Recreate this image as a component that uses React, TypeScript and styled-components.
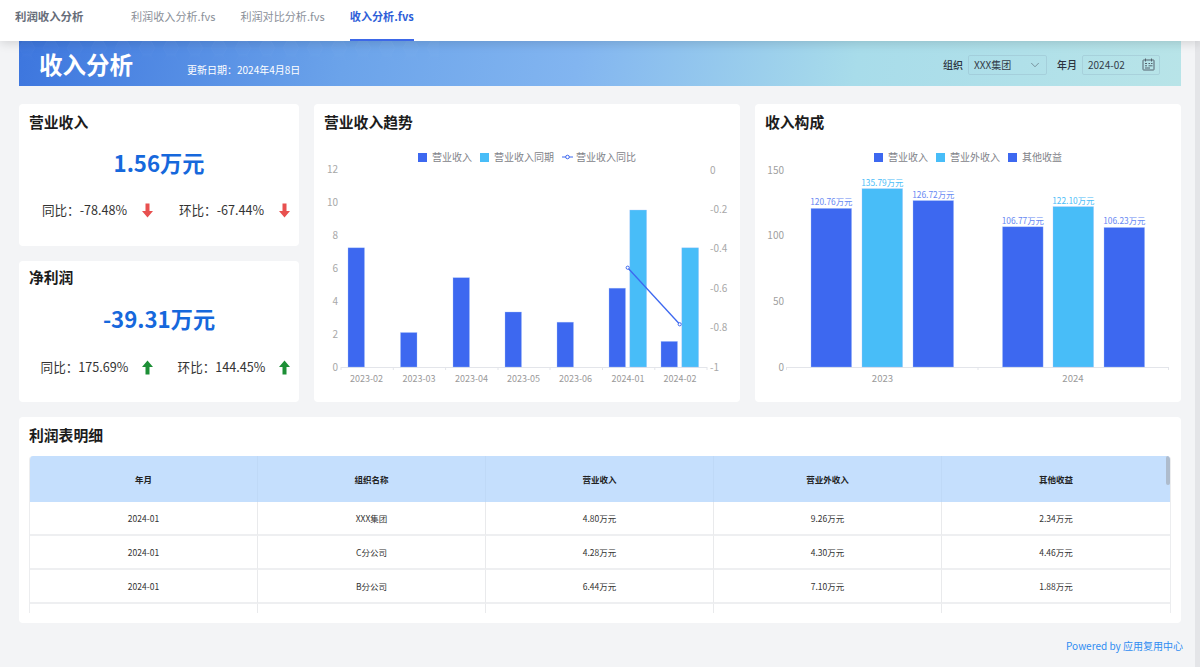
import React from "react";
import styled, { createGlobalStyle } from "styled-components";
import { ChevronDown } from "lucide-react";

const BLUE = "#3d68f0";
const CYAN = "#48bdf8";
const FONT = `"Noto Sans CJK SC", "Noto Sans", sans-serif`;

const trendBars = [
  { label: "2023-02", x: 356, value: 7.26 },
  { label: "2023-03", x: 408.5, value: 2.1 },
  { label: "2023-04", x: 461, value: 5.44 },
  { label: "2023-05", x: 513, value: 3.35 },
  { label: "2023-06", x: 565, value: 2.73 },
  { label: "2024-01", x: 617.5, value: 4.8, last: 9.56 },
  { label: "2024-02", x: 669.5, value: 1.56, last: 7.26 },
];

const mixBars = [
  { x: 811, value: 120.76, text: "120.76万元", color: BLUE },
  { x: 862, value: 135.79, text: "135.79万元", color: CYAN },
  { x: 913, value: 126.72, text: "126.72万元", color: BLUE },
  { x: 1002.5, value: 106.77, text: "106.77万元", color: BLUE },
  { x: 1053, value: 122.1, text: "122.10万元", color: CYAN },
  { x: 1104, value: 106.23, text: "106.23万元", color: BLUE },
];

const rows = [
  ["2024-01", "XXX集团", "4.80万元", "9.26万元", "2.34万元"],
  ["2024-01", "C分公司", "4.28万元", "4.30万元", "4.46万元"],
  ["2024-01", "B分公司", "6.44万元", "7.10万元", "1.88万元"],
  ["", "", "", "", ""],
];

const GlobalStyle = createGlobalStyle`
  html, body {
    margin: 0;
    padding: 0;
    background: #f3f4f6;
    font-family: ${FONT};
    overflow: hidden;
  }
`;

const Page = styled.div`
  position: relative;
  width: 1200px;
  height: 667px;
  overflow: hidden;
  background: #f3f4f6;
`;

const Scrollbar = styled.div`
  position: absolute;
  top: 41px;
  right: 0;
  bottom: 0;
  width: 5px;
  background: #e4e5e8;
`;

const NavBar = styled.nav`
  position: relative;
  z-index: 2;
  height: 41px;
  display: flex;
  align-items: stretch;
  padding-left: 15px;
  background: #fff;
  box-shadow: 0 2px 10px rgba(0, 0, 0, 0.14);
`;

const NavTitle = styled.div`
  width: 116px;
  font-size: 11.4px;
  line-height: 32px;
  font-weight: 700;
  color: #666d79;
`;

const NavTab = styled.div<{ $active?: boolean }>`
  margin-right: 25px;
  font-size: 11.1px;
  line-height: 32px;
  font-weight: ${({ $active }) => ($active ? 700 : 400)};
  color: ${({ $active }) => ($active ? "#2f5fd8" : "#8b9099")};
  border-bottom: 2px solid ${({ $active }) => ($active ? "#3d68e8" : "transparent")};
  height: 41px;
  box-sizing: border-box;
`;

const Content = styled.main`
  padding: 0 19px;
`;

const Banner = styled.header`
  position: relative;
  height: 45px;
  display: flex;
  align-items: center;
  padding: 0 21px 0 20px;
  color: #fff;
  background: linear-gradient(100deg, #3d76de 0%, #6ba3ea 28%, #82b5f0 48%, #a8dcea 72%, #b8e4e8 100%);
`;

const HexTexture = styled.svg`
  position: absolute;
  left: 0;
  top: 0;
  opacity: 0.5;
`;

const BannerTitle = styled.h1`
  position: relative;
  margin: 0;
  width: 148px;
  font-size: 23.5px;
  line-height: 30px;
  font-weight: 700;
`;

const BannerDate = styled.span`
  position: relative;
  margin-top: 13px;
  font-size: 10px;
  line-height: 14px;
`;

const Filters = styled.div`
  position: relative;
  margin-left: auto;
  margin-top: 2px;
  display: flex;
  align-items: center;
  color: #2b3340;
`;

const FilterLabel = styled.label`
  margin-right: 5px;
  font-size: 10px;
  font-weight: 500;
`;

const FilterBox = styled.div<{ $width: number; $gap?: number }>`
  width: ${({ $width }) => $width}px;
  height: 20px;
  margin-right: ${({ $gap }) => $gap ?? 0}px;
  box-sizing: border-box;
  padding: 0 4px 0 5px;
  display: flex;
  align-items: center;
  justify-content: space-between;
  border: 1px solid rgba(140, 170, 190, 0.3);
  border-radius: 2px;
  font-size: 10px;
  color: #333c48;
`;

const Board = styled.section`
  margin-top: 18px;
  display: grid;
  grid-template-columns: 280px 426px 426px;
  column-gap: 15px;
  height: 298px;
`;

const KpiColumn = styled.div`
  display: grid;
  grid-template-columns: minmax(0, 1fr);
  grid-template-rows: 142px 141px;
  row-gap: 15px;
`;

const Card = styled.div`
  background: #fff;
  border-radius: 4px;
  padding: 6px 10px 0;
  box-sizing: border-box;
`;

const KpiCard = styled(Card)<{ $tight?: boolean }>`
  padding-top: ${({ $tight }) => ($tight ? 4 : 6)}px;
`;

const CardTitle = styled.h2`
  margin: 0;
  font-size: 14.8px;
  line-height: 24px;
  font-weight: 700;
  color: #1c1c1c;
`;

const KpiValue = styled.div<{ $tight?: boolean }>`
  margin-top: ${({ $tight }) => ($tight ? 10 : 9)}px;
  text-align: center;
  font-size: 22.2px;
  line-height: 38px;
  font-weight: 700;
  color: #1668dc;
`;

const StatRow = styled.div<{ $tight?: boolean }>`
  margin: ${({ $tight }) => ($tight ? 20 : 19)}px -10px 0 5px;
  display: grid;
  grid-template-columns: 137px 1fr;
`;

const Stat = styled.div`
  display: flex;
  align-items: center;
`;

const StatText = styled.span`
  width: 101px;
  margin-right: 7px;
  text-align: center;
  white-space: nowrap;
  font-size: 12.6px;
  line-height: 20px;
  color: #333;
`;

const ChartCard = styled(Card)`
  padding-top: 6px;
`;

const Legend = styled.div`
  margin-top: 15px;
  margin-bottom: -6px;
  height: 16px;
  display: flex;
  align-items: center;
  justify-content: center;
`;

const LegendItem = styled.span`
  display: flex;
  align-items: center;
  margin: 0 4px;
  font-size: 10px;
  line-height: 16px;
  color: #7f8389;
`;

const Swatch = styled.i<{ $color: string }>`
  width: 9px;
  height: 9px;
  margin-right: 5px;
  background: ${({ $color }) => $color};
`;

const LineKey = styled.svg`
  margin-right: 3px;
`;

const ChartSvg = styled.svg`
  display: block;
  margin: 0 -10px;
  font-family: ${FONT};
`;

const TableCard = styled(Card)`
  margin-top: 15px;
  height: 206px;
`;

const TableClip = styled.div`
  position: relative;
  margin-top: 9px;
  height: 157px;
  overflow: hidden;
  border-radius: 4px 4px 0 0;
  border-left: 1px solid #ecedef;
  border-right: 1px solid #ecedef;
`;

const TableGrid = styled.div`
  display: grid;
  grid-template-columns: repeat(5, 1fr);
  grid-auto-rows: 34px;
`;

const HeadRow = styled.div`
  display: grid;
  grid-template-columns: repeat(5, 1fr);
`;

const HeadCell = styled.div`
  height: 46px;
  display: flex;
  align-items: center;
  justify-content: center;
  background: #c5dffd;
  border-right: 1px solid #bfd9f7;
  font-size: 8.5px;
  font-weight: 700;
  color: #222;
  &:nth-child(5) {
    border-right: none;
  }
`;

const BodyCell = styled.div`
  display: flex;
  align-items: center;
  justify-content: center;
  box-sizing: border-box;
  border-right: 1px solid #e9eaec;
  border-bottom: 2px solid #eeeff1;
  font-size: 8.5px;
  color: #333;
  &:nth-child(5n) {
    border-right: none;
  }
`;

const ThumbBar = styled.div`
  position: absolute;
  top: 0;
  right: 0;
  width: 4px;
  height: 29px;
  background: #aebccd;
  border-radius: 2px;
`;

const Footer = styled.div`
  margin-top: 15px;
  margin-right: -2px;
  text-align: right;
  font-size: 10px;
  line-height: 16px;
  color: #2f8cf2;
`;

const Arrow = ({ up }: { up?: boolean }) => (
  <svg width="11" height="15" viewBox="0 0 11 15">
    <path
      d={up ? "M5.5 0.5 L11 7 H7.5 V14.5 H3.5 V7 H0 Z" : "M5.5 14.5 L11 8 H7.5 V0.5 H3.5 V8 H0 Z"}
      fill={up ? "#1d8f36" : "#e8504f"}
    />
  </svg>
);

const CalendarIcon = () => (
  <svg width="13" height="13" viewBox="0 0 13 13" fill="none" stroke="#55636e" strokeWidth="1">
    <rect x="1" y="2" width="11" height="10" rx="0.5" />
    <path d="M3.5 0.5V3.5M9.5 0.5V3.5M3 5.5H5M6.5 5.5H8M9 5.5H10.5M3 7.8H5M6.5 7.8H10.5M3 10H8" />
  </svg>
);

const Hexes = () => (
  <HexTexture width="420" height="24">
    <defs>
      <pattern id="hex" width="24" height="14" patternUnits="userSpaceOnUse">
        <path
          d="M0 7 L4 0 H12 L16 7 L12 14 H4 Z M16 7 H24"
          fill="rgba(255,255,255,0.05)"
          stroke="rgba(255,255,255,0.09)"
          strokeWidth="0.6"
        />
      </pattern>
      <linearGradient id="hexFade" x1="0" y1="0" x2="0" y2="1">
        <stop offset="0" stopColor="#fff" />
        <stop offset="1" stopColor="#000" />
      </linearGradient>
      <mask id="hexMask">
        <rect width="420" height="24" fill="url(#hexFade)" />
      </mask>
    </defs>
    <rect width="420" height="24" fill="url(#hex)" mask="url(#hexMask)" />
  </HexTexture>
);

const Bar = ({ x, width, top, bottom, color }: { x: number; width: number; top: number; bottom: number; color: string }) => (
  <rect x={x} y={top} width={width} height={bottom - top} fill={color} stroke="#a9c4fb" strokeOpacity="0.55" strokeWidth="0.6" />
);

// chart coordinates are in page pixels, the viewBox shifts them into the card
const TrendChart = () => {
  const base = 367;
  const y = (v: number) => base - v * 16.42;
  const right = (v: number) => base - (v + 1) * 197;
  return (
    <ChartSvg width="426" height="234" viewBox="314 159 426 234">
      {[0, 2, 4, 6, 8, 10, 12].map((v) => (
        <text key={v} x="338" y={y(v) + 3.5} textAnchor="end" fontSize="10" fill="#a8a8a8">
          {v}
        </text>
      ))}
      {[0, -0.2, -0.4, -0.6, -0.8, -1].map((v) => (
        <text key={v} x="710" y={right(v) + 3.5} fontSize="10" fill="#a8a8a8">
          {v}
        </text>
      ))}
      <line x1="341" x2="707" y1="367.5" y2="367.5" stroke="#e3e5ea" />
      {[341, 393.3, 445.6, 498, 550, 602.5, 654.8, 707].map((x) => (
        <line key={x} x1={x} x2={x} y1="367" y2="370" stroke="#e3e5ea" />
      ))}
      {trendBars.map((b) => (
        <g key={b.label}>
          <Bar x={b.last ? b.x - 8.5 : b.x - 8} width={16.5} top={y(b.value)} bottom={base} color={BLUE} />
          {b.last && <Bar x={b.x + 12.3} width={16.8} top={y(b.last)} bottom={base} color={CYAN} />}
          <text x={b.x + 10.5} y="382" textAnchor="middle" fontSize="9" fill="#9a9a9a">
            {b.label}
          </text>
        </g>
      ))}
      <line x1="627.7" y1="267.7" x2="679.7" y2="324.3" stroke="#3d68f0" strokeWidth="1.3" />
      <circle cx="627.7" cy="267.7" r="1.6" fill="#fff" stroke="#3d68f0" />
      <circle cx="679.7" cy="324.3" r="1.6" fill="#fff" stroke="#3d68f0" />
    </ChartSvg>
  );
};

const MixChart = () => {
  const base = 367;
  const y = (v: number) => base - v * 1.3133;
  return (
    <ChartSvg width="426" height="234" viewBox="755 159 426 234">
      {[0, 50, 100, 150].map((v) => (
        <text key={v} x="784" y={y(v) + 3.5} textAnchor="end" fontSize="10" fill="#a0a0a0">
          {v}
        </text>
      ))}
      <line x1="786.5" x2="1168.5" y1="367.5" y2="367.5" stroke="#e3e5ea" />
      {[786.5, 978, 1168.5].map((x) => (
        <line key={x} x1={x} x2={x} y1="367" y2="370" stroke="#e3e5ea" />
      ))}
      {mixBars.map((b) => (
        <g key={b.x}>
          <Bar x={b.x} width={40.6} top={y(b.value)} bottom={base} color={b.color} />
          <text
            x={b.x + 20.3}
            y={y(b.value) - 3}
            textAnchor="middle"
            fontSize="8.4"
            fill={b.color === CYAN ? "#4cbdf8" : "#6788f3"}
          >
            {b.text}
          </text>
        </g>
      ))}
      <text x="882.5" y="382" textAnchor="middle" fontSize="9.6" fill="#9a9a9a">2023</text>
      <text x="1073" y="382" textAnchor="middle" fontSize="9.6" fill="#9a9a9a">2024</text>
    </ChartSvg>
  );
};

const Kpi = ({ title, value, stats, up }: { title: string; value: string; stats: string[]; up?: boolean }) => (
  <KpiCard $tight={up}>
    <CardTitle>{title}</CardTitle>
    <KpiValue $tight={up}>{value}</KpiValue>
    <StatRow $tight={up}>
      {stats.map((s) => (
        <Stat key={s}>
          <StatText>{s}</StatText>
          <Arrow up={up} />
        </Stat>
      ))}
    </StatRow>
  </KpiCard>
);

export default function App() {
  return (
    <Page>
      <GlobalStyle />
      <NavBar>
        <NavTitle>利润收入分析</NavTitle>
        <NavTab>利润收入分析.fvs</NavTab>
        <NavTab>利润对比分析.fvs</NavTab>
        <NavTab $active>收入分析.fvs</NavTab>
      </NavBar>
      <Content>
        <Banner>
          <Hexes />
          <BannerTitle>收入分析</BannerTitle>
          <BannerDate>更新日期：2024年4月8日</BannerDate>
          <Filters>
            <FilterLabel>组织</FilterLabel>
            <FilterBox $width={79} $gap={10}>
              XXX集团
              <ChevronDown size={14} strokeWidth={1} color="#4d5a66" />
            </FilterBox>
            <FilterLabel>年月</FilterLabel>
            <FilterBox $width={78}>
              2024-02
              <CalendarIcon />
            </FilterBox>
          </Filters>
        </Banner>
        <Board>
          <KpiColumn>
            <Kpi title="营业收入" value="1.56万元" stats={["同比：-78.48%", "环比：-67.44%"]} />
            <Kpi title="净利润" value="-39.31万元" stats={["同比：175.69%", "环比：144.45%"]} up />
          </KpiColumn>
          <ChartCard>
            <CardTitle>营业收入趋势</CardTitle>
            <Legend>
              <LegendItem><Swatch $color={BLUE} />营业收入</LegendItem>
              <LegendItem><Swatch $color={CYAN} />营业收入同期</LegendItem>
              <LegendItem>
                <LineKey width="11" height="6" viewBox="0 0 11 6">
                  <line x1="0" x2="11" y1="3" y2="3" stroke={BLUE} />
                  <circle cx="5.5" cy="3" r="1.8" fill="#fff" stroke={BLUE} />
                </LineKey>
                营业收入同比
              </LegendItem>
            </Legend>
            <TrendChart />
          </ChartCard>
          <ChartCard>
            <CardTitle>收入构成</CardTitle>
            <Legend>
              <LegendItem><Swatch $color={BLUE} />营业收入</LegendItem>
              <LegendItem><Swatch $color={CYAN} />营业外收入</LegendItem>
              <LegendItem><Swatch $color={BLUE} />其他收益</LegendItem>
            </Legend>
            <MixChart />
          </ChartCard>
        </Board>
        <TableCard>
          <CardTitle>利润表明细</CardTitle>
          <TableClip>
            <HeadRow>
              {["年月", "组织名称", "营业收入", "营业外收入", "其他收益"].map((h) => (
                <HeadCell key={h}>{h}</HeadCell>
              ))}
            </HeadRow>
            <TableGrid>
              {rows.flatMap((row, r) =>
                row.map((cell, c) => <BodyCell key={`${r}-${c}`}>{cell}</BodyCell>)
              )}
            </TableGrid>
            <ThumbBar />
          </TableClip>
        </TableCard>
        <Footer>Powered by 应用复用中心</Footer>
      </Content>
      <Scrollbar />
    </Page>
  );
}
